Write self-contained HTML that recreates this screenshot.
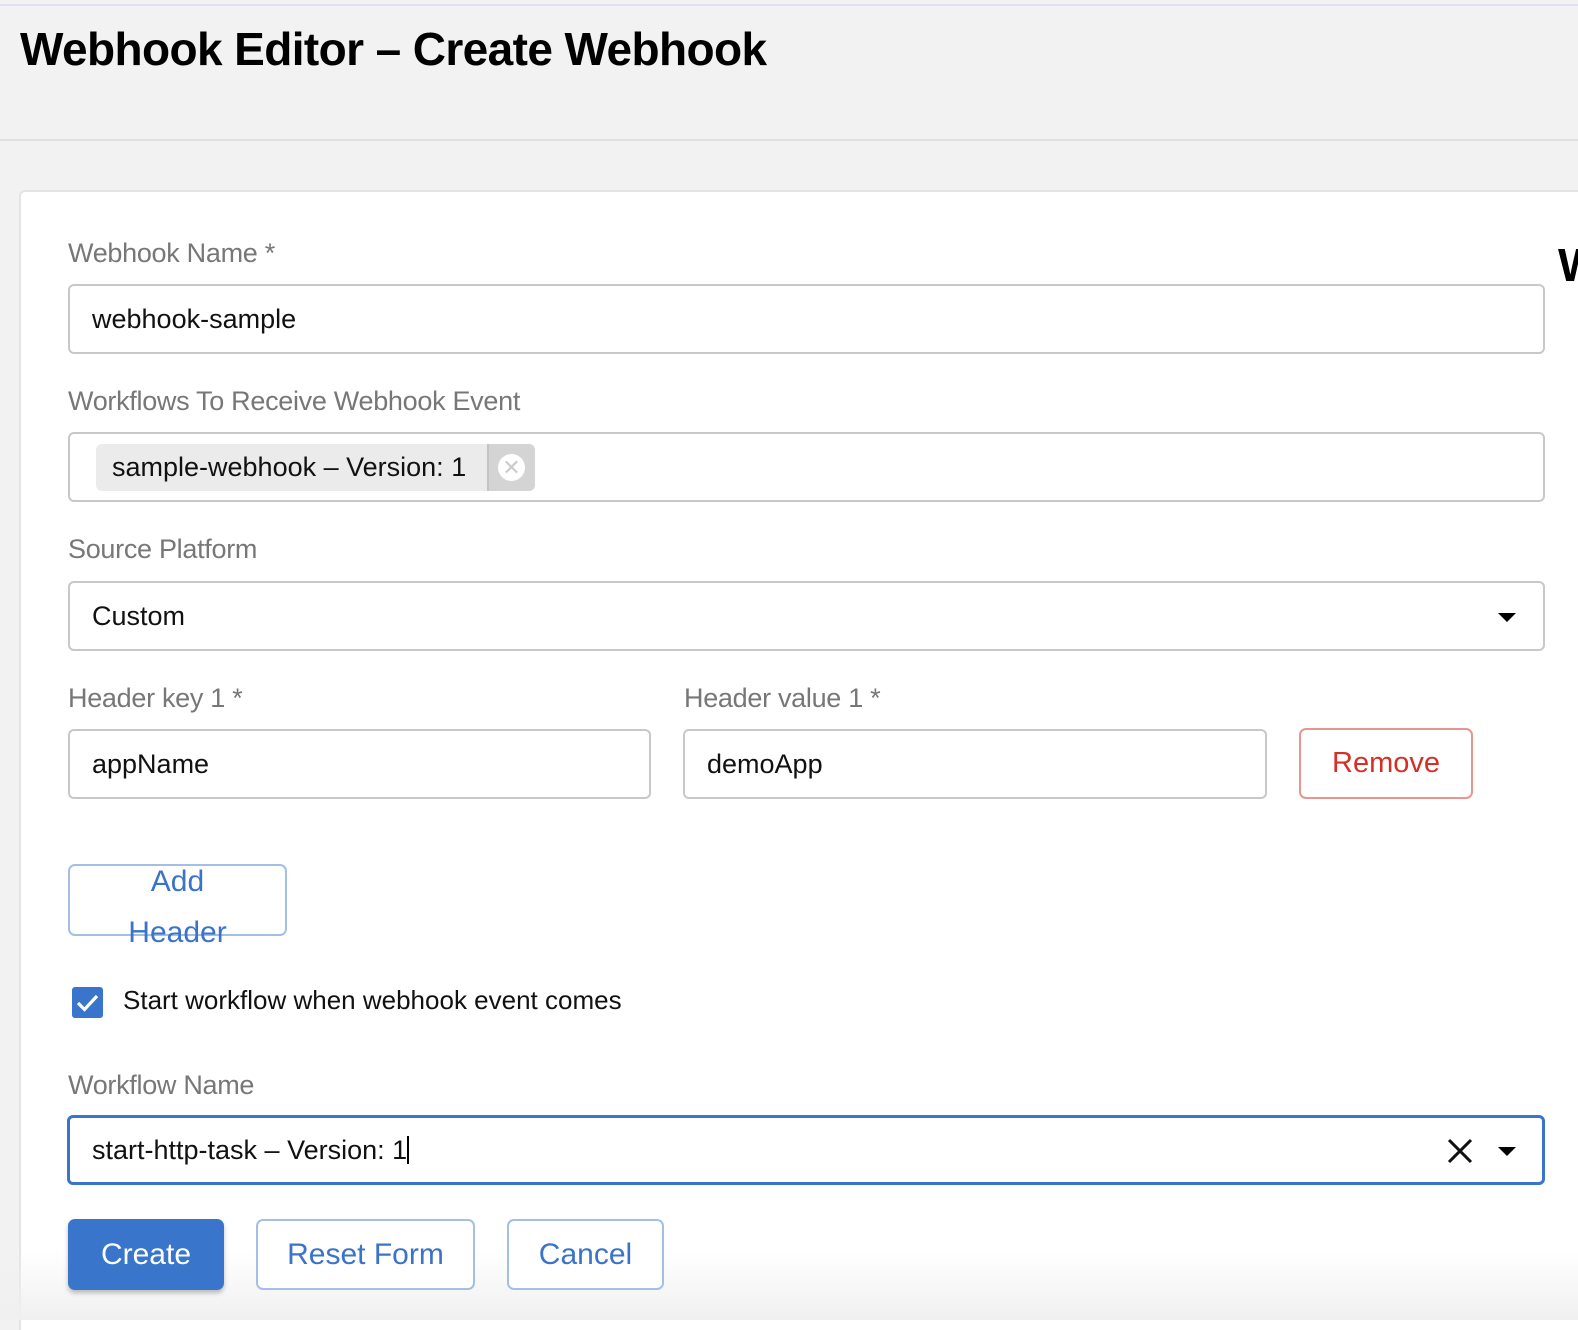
<!DOCTYPE html>
<html><head><meta charset="utf-8"><style>
*{box-sizing:border-box;margin:0;padding:0}
body{width:1578px;height:1320px;overflow:hidden;background:#f2f2f2;font-family:"Liberation Sans",sans-serif;position:relative}
.topline{position:absolute;left:0;top:4px;width:1578px;height:2px;background:#dfe0f3}
h1{position:absolute;left:20px;top:22px;font-size:46px;font-weight:bold;letter-spacing:-0.6px;color:#000}
.div{position:absolute;left:0;top:139px;width:1578px;height:2px;background:#e0e0e0}
.card{position:absolute;left:19px;top:190px;width:1600px;height:1140px;background:#fff;border-left:2px solid #e4e4e4;border-top:2px solid #e4e4e4;border-radius:6px 0 0 0}
.fade{position:absolute;left:0;top:1250px;width:1578px;height:70px;background:linear-gradient(rgba(242,242,242,0),#f0f0f0)}
.lbl{position:absolute;font-size:27px;color:#777;letter-spacing:-0.3px}
.inp{position:absolute;height:70px;border:2px solid #c8c8c8;border-radius:6px;background:#fff;font-size:27px;color:#111;padding-left:22px;line-height:66px}
.btn{position:absolute;border-radius:7px;font-size:30px;text-align:center;background:#fff}
.caret{position:absolute;width:0;height:0;border-left:9px solid transparent;border-right:9px solid transparent;border-top:9px solid #000}
</style></head><body>
<div class="topline"></div>
<h1>Webhook Editor – Create Webhook</h1>
<div class="div"></div>
<div class="card"></div>
<div style="position:absolute;left:1558px;top:238px;font-size:46px;font-weight:bold;color:#000">W</div>

<div class="lbl" style="left:68px;top:238px">Webhook Name *</div>
<div class="inp" style="left:68px;top:284px;width:1477px">webhook-sample</div>

<div class="lbl" style="left:68px;top:386px">Workflows To Receive Webhook Event</div>
<div class="inp" style="left:68px;top:432px;width:1477px"></div>
<div style="position:absolute;left:96px;top:444px;width:439px;height:47px;background:#ebebeb;border-radius:6px;font-size:27px;color:#111;line-height:47px;padding-left:16px">sample-webhook – Version: 1</div>
<div style="position:absolute;left:487px;top:444px;width:48px;height:47px;background:#d4d4d4;border-left:2px solid #c4c4c4;border-radius:0 6px 6px 0"></div>
<div style="position:absolute;left:498px;top:454px;width:27px;height:27px;border-radius:50%;background:#fff;color:#ccc;font-size:22px;line-height:27px;text-align:center">✕</div>

<div class="lbl" style="left:68px;top:534px">Source Platform</div>
<div class="inp" style="left:68px;top:581px;width:1477px">Custom</div>
<div class="caret" style="left:1498px;top:613px"></div>

<div class="lbl" style="left:68px;top:683px">Header key 1 *</div>
<div class="inp" style="left:68px;top:729px;width:583px">appName</div>
<div class="lbl" style="left:684px;top:683px">Header value 1 *</div>
<div class="inp" style="left:683px;top:729px;width:584px">demoApp</div>
<div class="btn" style="left:1299px;top:728px;width:174px;height:71px;border:2px solid #e79591;color:#d52f26;line-height:67px;font-size:29px">Remove</div>

<div class="btn" style="left:68px;top:864px;width:219px;height:72px;border:2px solid #a3bfe8"></div>
<div style="position:absolute;left:68px;top:856px;width:219px;text-align:center;color:#3a73c9;font-size:30px;line-height:51px">Add<br>Header</div>

<div style="position:absolute;left:72px;top:987px;width:31px;height:31px;background:#3a75cc;border-radius:3px"></div>
<svg style="position:absolute;left:72px;top:987px" width="31" height="31" viewBox="0 0 31 31"><path d="M6 16 L12.5 22.5 L25 9" stroke="#fff" stroke-width="3.2" fill="none"/></svg>
<div style="position:absolute;left:123px;top:985px;font-size:26px;color:#111">Start workflow when webhook event comes</div>

<div class="lbl" style="left:68px;top:1070px">Workflow Name</div>
<div class="inp" style="left:67px;top:1115px;width:1478px;border:3px solid #3a75cc;line-height:64px">start-http-task – Version: 1<span style="display:inline-block;width:2px;height:28px;background:#000;vertical-align:-5px"></span></div>
<svg style="position:absolute;left:1447px;top:1138px" width="26" height="26" viewBox="0 0 26 26"><path d="M2 2 L24 24 M24 2 L2 24" stroke="#111" stroke-width="3"/></svg>
<div class="caret" style="left:1498px;top:1147px"></div>

<div class="fade"></div>
<div class="btn" style="left:68px;top:1219px;width:156px;height:71px;background:#3a75cc;color:#fff;line-height:71px;box-shadow:0 3px 5px rgba(0,0,0,.25)">Create</div>
<div class="btn" style="left:256px;top:1219px;width:219px;height:71px;border:2px solid #a3bfe8;color:#3a73c9;line-height:67px">Reset Form</div>
<div class="btn" style="left:507px;top:1219px;width:157px;height:71px;border:2px solid #a3bfe8;color:#3a73c9;line-height:67px">Cancel</div>
</body></html>
